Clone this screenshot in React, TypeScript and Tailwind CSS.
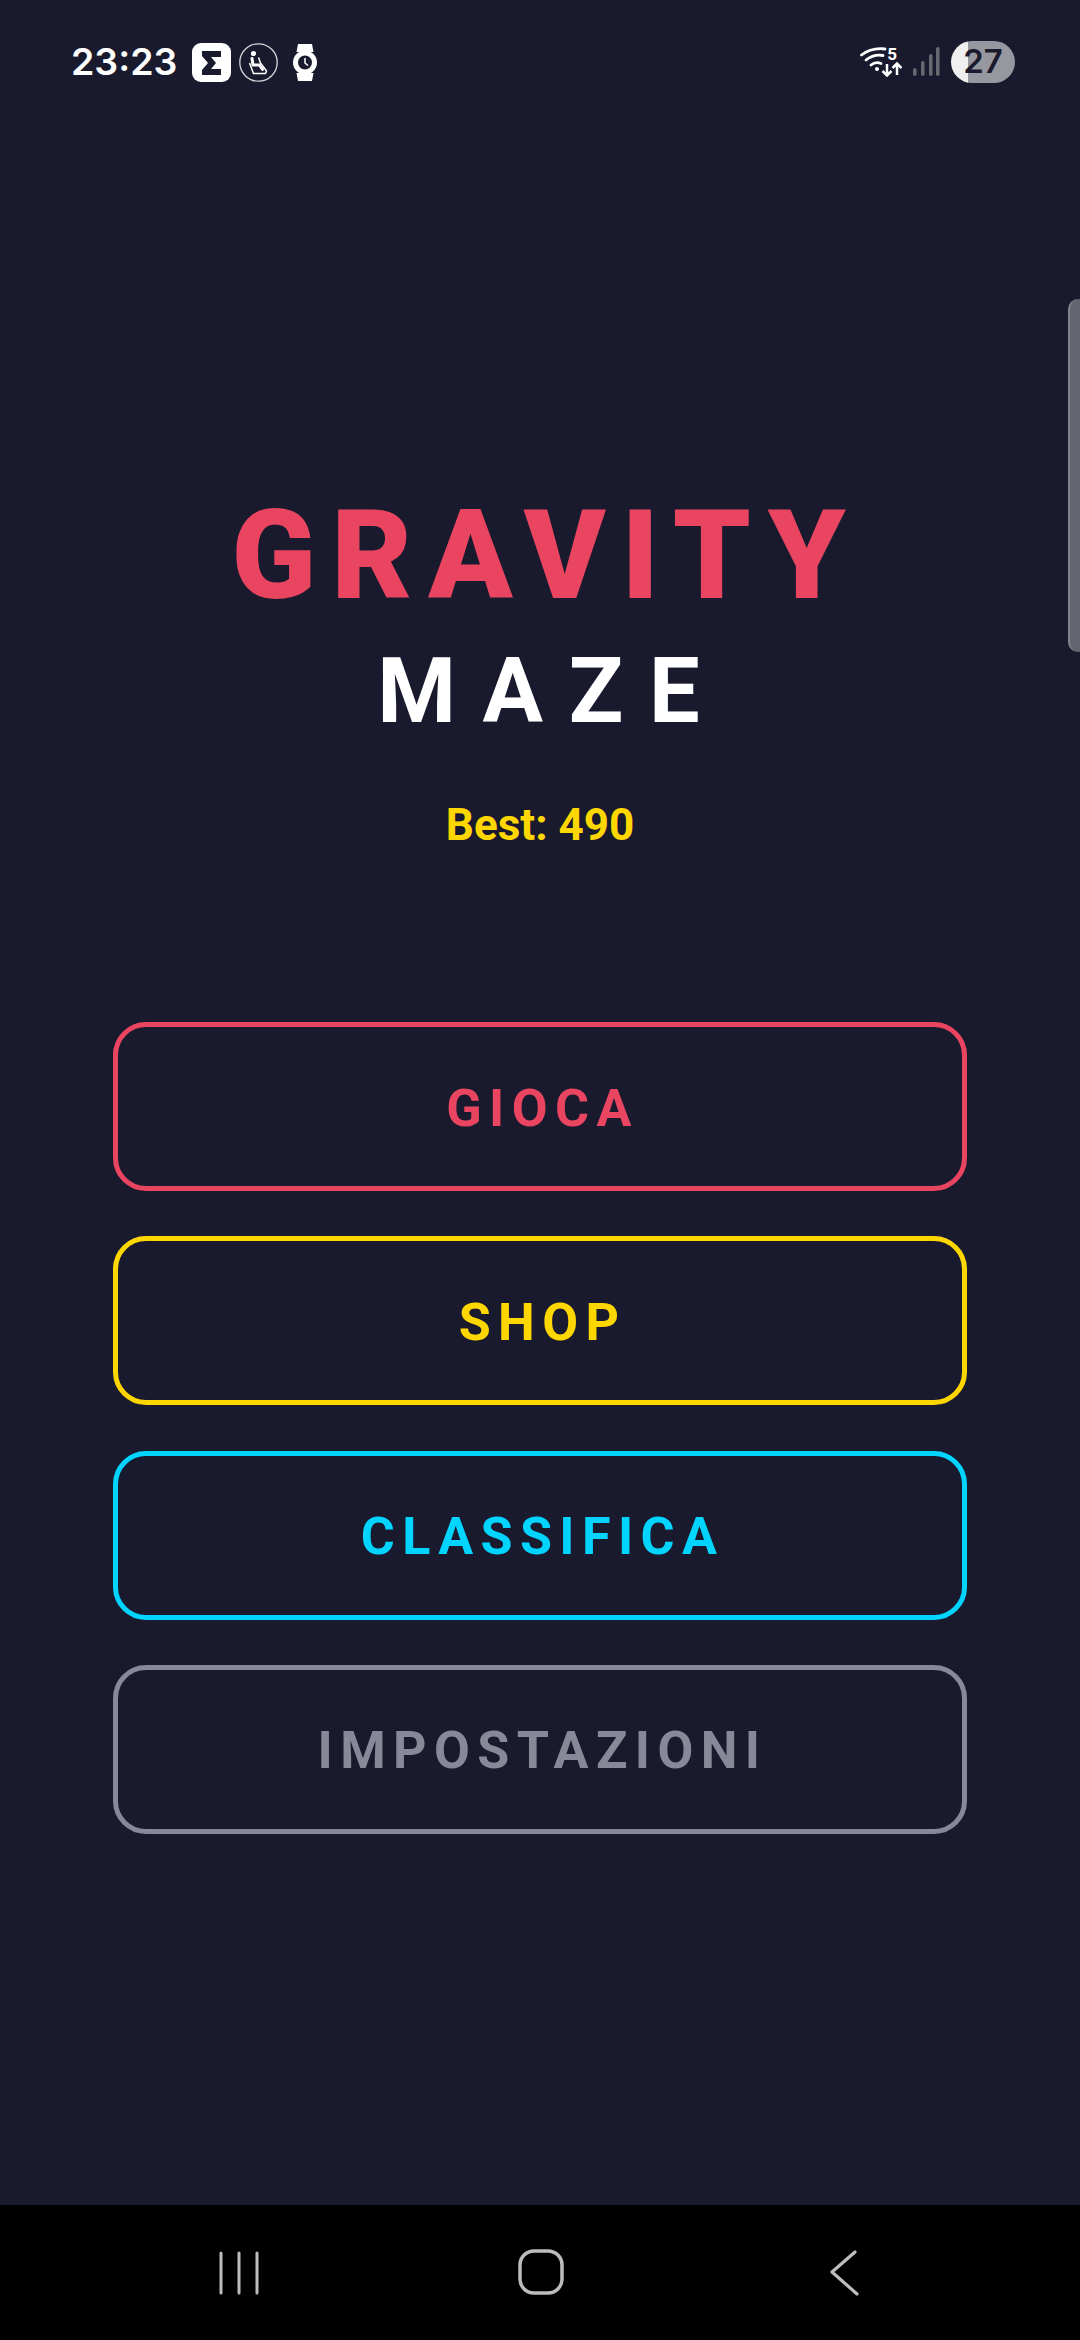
import React from "react";

function SigmaBadge() {
  return (
    <svg width="39" height="39" viewBox="0 0 39 39">
      <rect width="39" height="39" rx="9" fill="#fff" />
      <path d="M10 8H29V14H19L24 20L19 26H29V32H10V27L16 20L10 13Z" fill="#1a1a2e" />
    </svg>
  );
}

function SeatBadge() {
  return (
    <svg width="39" height="39" viewBox="0 0 39 39" fill="none">
      <circle cx="19.500" cy="19.500" r="18.700" stroke="#d8d8dc" strokeWidth="1.300" />
      <circle cx="14.500" cy="10.500" r="2.600" fill="#fff" />
      <path d="M13 15.500l1 6.500h6.500l3 4.500" stroke="#fff" strokeWidth="3" strokeLinecap="round" strokeLinejoin="round" />
      <path d="M19.500 14.500l2 5.500 6 8-1 2.500H14.500l-4-10.500" stroke="#fff" strokeWidth="1.500" strokeLinejoin="round" />
    </svg>
  );
}

function WatchIcon() {
  return (
    <svg width="24" height="37" viewBox="0 0 24 37" fill="none">
      <path d="M5 0h14l1.500 8h-17zM3.500 29h17L19 37H5z" fill="#fff" />
      <circle cx="12" cy="18.500" r="9.500" stroke="#fff" strokeWidth="5" fill="#1a1a2e" />
      <path d="M12 14v5l3 2.500" stroke="#fff" strokeWidth="1.500" />
    </svg>
  );
}

function WifiIcon() {
  return (
    <svg width="42" height="30" viewBox="0 0 42 30" fill="none">
      <path d="M1.500 8C8 3 17 1 25 2" stroke="#fff" strokeWidth="2.800" strokeLinecap="round" />
      <path d="M6 13C11 9 17 7.500 23 8.500" stroke="#fff" strokeWidth="2.800" strokeLinecap="round" />
      <path d="M11 18c3-2.500 6.500-3 10-1.500" stroke="#fff" strokeWidth="2.800" strokeLinecap="round" />
      <circle cx="17" cy="22" r="2" fill="#fff" />
      <path d="M27 17v11M22.500 24l4.500 4.500 4.500-4.500M37 28V17M32.500 21l4.500-4.500 4.500 4.500" stroke="#fff" strokeWidth="2.500" />
    </svg>
  );
}

function SignalIcon() {
  return (
    <svg width="28" height="30" viewBox="0 0 28 30">
      <rect x="1" y="21" width="3.600" height="8" rx="1.800" fill="#67676f" />
      <rect x="9" y="14" width="3.600" height="15" rx="1.800" fill="#67676f" />
      <rect x="17" y="7" width="3.600" height="22" rx="1.800" fill="#67676f" />
      <rect x="24" y="0" width="3.600" height="29" rx="1.800" fill="#67676f" />
    </svg>
  );
}

function RecentsIcon() {
  return (
    <svg width="42" height="44" viewBox="0 0 42 44" stroke="#bdbdbd" strokeWidth="3" strokeLinecap="round">
      <path d="M3 2v40M21 2v40M39 2v40" />
    </svg>
  );
}

function HomeIcon() {
  return (
    <svg width="46" height="46" viewBox="0 0 46 46" fill="none">
      <rect x="2" y="2" width="42" height="42" rx="14" stroke="#bdbdbd" strokeWidth="3.500" />
    </svg>
  );
}

function BackIcon() {
  return (
    <svg width="30" height="46" viewBox="0 0 30 46" fill="none">
      <path d="M26 2L3 22l25 22" stroke="#bdbdbd" strokeWidth="3.200" strokeLinecap="round" strokeLinejoin="round" />
    </svg>
  );
}

function MenuButton({ label, className }: { label: string; className: string }) {
  return (
    <button
      className={`flex h-[169px] w-full items-center justify-center rounded-[33px] border-[5.5px] pl-[5px] pt-[4px] text-[52px] font-bold tracking-[7.4px] ${className}`}
    >
      {label}
    </button>
  );
}

export default function App() {
  return (
    <div className="relative flex h-[2340px] w-[1080px] flex-col overflow-hidden bg-[#1a1a2e] font-['Roboto',sans-serif]">
      <header className="flex h-[124px] shrink-0 items-center justify-between pl-[71px] pr-[65px]">
        <div className="flex items-center">
          <span className="w-[121px] font-['Inter',sans-serif] text-[37.500px] font-semibold text-white">23:23</span>
          <SigmaBadge />
          <span className="ml-[8px] flex"><SeatBadge /></span>
          <span className="ml-[15px] flex"><WatchIcon /></span>
        </div>
        <div className="flex items-center">
          <span className="relative flex">
            <WifiIcon />
            <span className="absolute right-[5px] top-[-1px] text-[17px] font-bold leading-none text-white">5</span>
          </span>
          <span className="ml-[10px] flex"><SignalIcon /></span>
          <span className="ml-[11px] flex h-[42px] w-[64px] items-center justify-center rounded-full bg-[linear-gradient(90deg,#efeff0_27%,#97979f_27%)] font-['Inter',sans-serif] text-[33px] font-semibold text-[#1a1a2e]">
            27
          </span>
        </div>
      </header>

      <main className="flex flex-1 flex-col items-center">
        <h1 className="mt-[359px] pl-[12.700px] text-[124px] font-black leading-[145px] tracking-[15.700px] text-[#e94560]">GRAVITY</h1>
        <h2 className="mt-[11px] pl-[22.700px] text-[90px] font-bold leading-[105px] tracking-[25.700px] text-white">MAZE</h2>
        <p className="mt-[55px] text-[44px] font-bold leading-[52px] text-[#ffd700]">Best: 490</p>
        <div className="mt-[171px] flex w-[854px] flex-col gap-[45.300px]">
          <MenuButton label="GIOCA" className="border-[#e94560] text-[#e94560]" />
          <MenuButton label="SHOP" className="border-[#ffd700] text-[#ffd700]" />
          <MenuButton label="CLASSIFICA" className="border-[#00d4ff] text-[#00d4ff]" />
          <MenuButton label="IMPOSTAZIONI" className="border-[#888899] text-[#888899]" />
        </div>
      </main>

      <nav className="relative h-[135px] shrink-0 bg-black">
        <span className="absolute left-[218px] top-[46px] flex"><RecentsIcon /></span>
        <span className="absolute left-[518px] top-[44px] flex"><HomeIcon /></span>
        <span className="absolute left-[829px] top-[45px] flex"><BackIcon /></span>
      </nav>

      {/* Scroll handle resting on the right edge */}
      <div className="absolute right-0 top-[299px] h-[353px] w-[12px] rounded-l-[10px] border-l-[2px] border-[#83838c] bg-[#64646e]" />
    </div>
  );
}
